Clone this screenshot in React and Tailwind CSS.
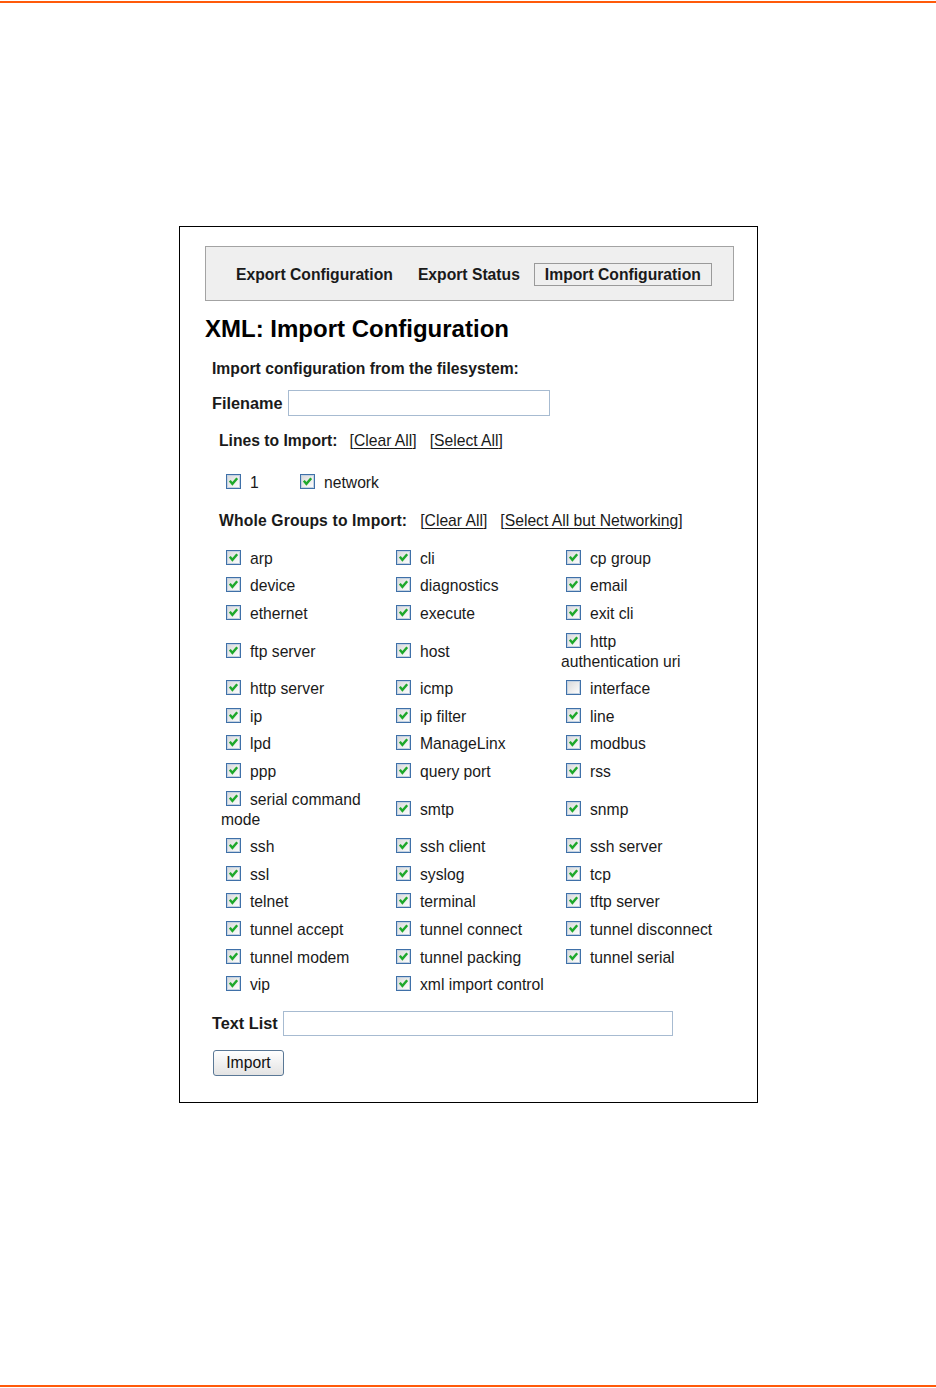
const lines = [
  { label: "1", checked: true },
  { label: "network", checked: true },
];

const groups = [
  ["arp", "cli", "cp group"],
  ["device", "diagnostics", "email"],
  ["ethernet", "execute", "exit cli"],
  ["ftp server", "host", "http authentication uri"],
  ["http server", "icmp", "interface"],
  ["ip", "ip filter", "line"],
  ["lpd", "ManageLinx", "modbus"],
  ["ppp", "query port", "rss"],
  ["serial command mode", "smtp", "snmp"],
  ["ssh", "ssh client", "ssh server"],
  ["ssl", "syslog", "tcp"],
  ["telnet", "terminal", "tftp server"],
  ["tunnel accept", "tunnel connect", "tunnel disconnect"],
  ["tunnel modem", "tunnel packing", "tunnel serial"],
  ["vip", "xml import control", null],
];

const unchecked = ["interface"];

function Box({ checked }) {
  return (
    <span className="inline-block align-[-1px] w-[15px] h-[15px] border border-[#3f70a8] bg-gradient-to-br from-[#d8d8d8] to-white shadow-[inset_0_0_0_1px_#c3d2e2] relative">
      {checked && (
        <svg viewBox="0 0 15 15" className="absolute -left-px -top-px w-[15px] h-[15px]">
          <path d="M3.8 6.8 L6.4 9.8 L11.2 4.2" fill="none" stroke="#1ea82b" strokeWidth="2.4" />
        </svg>
      )}
    </span>
  );
}

function Bracket({ children }) {
  return (
    <span className="font-normal">
      [<span className="underline underline-offset-2">{children}</span>]
    </span>
  );
}

export default function App() {
  return (
    <div className="w-[936px] h-[1388px] flex flex-col bg-white text-[#1a1a1a] font-['Liberation_Sans',Arial,sans-serif]">
      <div className="mt-px h-[2px] bg-[#ff5a0a]" />
      <div className="flex-1 pt-[223px]">
        <div className="ml-[179px] w-[579px] border border-black pt-[19px] pb-[26px] pl-[25px] pr-[23px]">
          <div className="h-[55px] border border-[#a3a3a3] bg-[#efefef] flex items-center pt-[2px] pl-[19px] gap-[2px] text-[15.7px] font-bold">
            <span className="px-[10px] border border-transparent">Export Configuration</span>
            <span className="px-[11px] border border-transparent">Export Status</span>
            <span className="px-[10px] leading-[21px] border border-[#9a9a9a]">Import Configuration</span>
          </div>

          <h1 className="mt-[14px] text-[24px] leading-[28px] font-bold text-black">XML: Import Configuration</h1>

          <div className="mt-[16px] ml-[7px] text-[15.7px] leading-[20px] font-bold">
            Import configuration from the filesystem:
          </div>

          <div className="mt-[11px] ml-[7px] flex items-center gap-[5px]">
            <span className="text-[16.3px] font-bold">Filename</span>
            <input className="w-[262px] h-[26px] border border-[#a7bbd1] bg-white outline-none" />
          </div>

          <div className="mt-[15px] ml-[14px] flex items-center gap-[13px] text-[15.7px] leading-[20px]">
            <span className="font-bold -mr-[1px]">Lines to Import:</span>
            <Bracket>Clear All</Bracket>
            <Bracket>Select All</Bracket>
          </div>

          <div className="mt-[22px] ml-[21px] flex text-[15.7px] leading-[20px]">
            {lines.map((l, i) => (
              <div key={l.label} className={i === 0 ? "w-[74px]" : ""}>
                <Box checked={l.checked} />
                <span className="ml-[9px]">{l.label}</span>
              </div>
            ))}
          </div>

          <div className="mt-[18px] ml-[14px] flex items-center gap-[13px] text-[15.7px] leading-[20px]">
            <span className="font-bold tracking-[0.15px]">Whole Groups to Import:</span>
            <Bracket>Clear All</Bracket>
            <Bracket>Select All but Networking</Bracket>
          </div>

          <div className="mt-[14px] ml-[16px] grid grid-cols-[170px_170px_156px] items-center text-[15.7px] leading-[20px]">
            {groups.flat().map((g, i) =>
              g ? (
                <div key={i} className="py-[3.8px]">
                  <span className="ml-[5px] mr-[9px]">
                    <Box checked={!unchecked.includes(g)} />
                  </span>
                  {g}
                </div>
              ) : (
                <div key={i} />
              )
            )}
          </div>

          <div className="mt-[12px] ml-[7px] flex items-center gap-[5px]">
            <span className="text-[16.3px] font-bold">Text List</span>
            <input className="w-[390px] h-[25px] border border-[#a7bbd1] bg-white outline-none" />
          </div>

          <button className="mt-[14px] ml-[8px] w-[71px] h-[26px] rounded-[3px] border border-[#5a7896] bg-gradient-to-b from-white to-[#e3e3e3] text-[15.7px] leading-none text-[#111]">
            Import
          </button>
        </div>
      </div>
      <div className="mb-px h-[2px] bg-[#ff5a0a]" />
    </div>
  );
}
